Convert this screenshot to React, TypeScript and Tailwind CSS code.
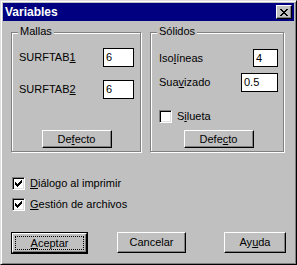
import React from 'react';

const raised =
  'border border-t-white border-l-white border-r-black border-b-black shadow-[inset_-1px_-1px_0_#808080] bg-[#c0c0c0]';
const sunken =
  'border border-t-[#808080] border-l-[#808080] border-r-white border-b-white shadow-[inset_1px_1px_0_#000,inset_-1px_-1px_0_#dfdfdf] bg-white';
const etched = 'border border-[#808080] shadow-[1px_1px_0_#fff,inset_1px_1px_0_#fff]';

function CheckMark() {
  return (
    <svg width="7" height="7" viewBox="0 0 7 7" shapeRendering="crispEdges">
      <path
        d="M6 0h1v3h-1zM5 1h1v3h-1zM4 2h1v3h-1zM3 3h1v3h-1zM2 4h1v3h-1zM1 3h1v3h-1zM0 2h1v3h-1z"
        fill="#000"
      />
    </svg>
  );
}

function CheckBox({ checked }: { checked: boolean }) {
  return (
    <span className={`w-[13px] h-[13px] shrink-0 flex items-center justify-center ${sunken}`}>
      {checked && <CheckMark />}
    </span>
  );
}

function CloseGlyph() {
  return (
    <svg width="8" height="7" viewBox="0 0 8 7" shapeRendering="crispEdges">
      <path
        d="M0 0h2v1h-2zM6 0h2v1h-2zM1 1h2v1h-2zM5 1h2v1h-2zM2 2h4v1h-4zM3 3h2v1h-2zM2 4h4v1h-4zM1 5h2v1h-2zM5 5h2v1h-2zM0 6h2v1h-2zM6 6h2v1h-2z"
        fill="#000"
      />
    </svg>
  );
}

function GroupBox({ label, className, children }: { label: string; className: string; children: React.ReactNode }) {
  return (
    <div className={`relative h-[120px] ${etched} ${className}`}>
      <span className="absolute left-[6px] -top-[8px] px-[2px] bg-[#c0c0c0] leading-[13px]">{label}</span>
      {children}
    </div>
  );
}

export default function App() {
  return (
    <div className="w-[297px] h-[265px] bg-[#c0c0c0] border border-t-[#dfdfdf] border-l-[#dfdfdf] border-r-black border-b-black shadow-[inset_1px_1px_0_#fff,inset_-1px_-1px_0_#808080] p-[2px] flex flex-col font-['Liberation_Sans',Arial,sans-serif] text-[11px] text-black select-none">
      {/* Title bar */}
      <div className="h-[18px] bg-[#000080] flex items-center justify-between pl-[2px] pr-[2px]">
        <span className="text-white font-bold text-[12px] leading-none">Variables</span>
        <span className={`w-[16px] h-[14px] flex items-center justify-center ${raised}`}>
          <CloseGlyph />
        </span>
      </div>

      <div className="flex flex-col pl-[8px]">
        {/* Group boxes */}
        <div className="flex mt-[11px]">
          <GroupBox label="Mallas" className="w-[130px]">
            <div className="flex flex-col pt-[15px] pl-[7px] pr-[6px]">
              <div className="flex items-center justify-between">
                <span>
                  SURFTAB<u>1</u>
                </span>
                <span className="w-[31px] h-[19px] border border-black bg-white pl-[2px] flex items-center">6</span>
              </div>
              <div className="flex items-center justify-between mt-[13px]">
                <span>
                  SURFTAB<u>2</u>
                </span>
                <span className="w-[31px] h-[19px] border border-black bg-white pl-[2px] flex items-center">6</span>
              </div>
              <button className={`mx-auto mt-[31px] w-[70px] h-[18px] flex items-center justify-center ${raised}`}>
                <span>
                  De<u>f</u>ecto
                </span>
              </button>
            </div>
          </GroupBox>

          <GroupBox label="Sólidos" className="w-[134px] ml-[9px]">
            <div className="flex flex-col pt-[16px] pl-[8px] pr-[5px]">
              <div className="flex items-center justify-between">
                <span>
                  Iso<u>l</u>íneas
                </span>
                <span className="w-[25px] h-[18px] border border-black bg-white pl-[2px] flex items-center">4</span>
              </div>
              <div className="flex items-center justify-between mt-[6px]">
                <span>
                  Sua<u>v</u>izado
                </span>
                <span className="w-[37px] h-[19px] border border-black bg-white pl-[2px] flex items-center">0.5</span>
              </div>
              <div className="flex items-center h-[13px] mt-[18px]">
                <CheckBox checked={false} />
                <span className="ml-[5px]">
                  S<u>i</u>lueta
                </span>
              </div>
              <button className={`mx-auto mt-[7px] w-[70px] h-[18px] flex items-center justify-center ${raised}`}>
                <span>
                  Defe<u>c</u>to
                </span>
              </button>
            </div>
          </GroupBox>
        </div>

        {/* Options */}
        <div className="flex items-center h-[13px] mt-[25px] pl-[1px]">
          <CheckBox checked />
          <span className="ml-[5px]">
            <u>D</u>iálogo al imprimir
          </span>
        </div>
        <div className="flex items-center h-[13px] mt-[8px] pl-[1px]">
          <CheckBox checked />
          <span className="ml-[5px]">
            <u>G</u>estión de archivos
          </span>
        </div>

        {/* Buttons */}
        <div className="flex items-start mt-[21px]">
          <button className="w-[77px] h-[22px] border border-black flex">
            <span className={`flex-1 flex p-[2px] ${raised}`}>
              <span className="flex-1 border border-dotted border-black flex items-center justify-center">
                <span>
                  <u>A</u>ceptar
                </span>
              </span>
            </span>
          </button>
          <button className={`ml-[29px] w-[69px] h-[21px] flex items-center justify-center ${raised}`}>Cancelar</button>
          <button className={`ml-[38px] w-[62px] h-[21px] flex items-center justify-center ${raised}`}>
            <span>
              Ay<u>u</u>da
            </span>
          </button>
        </div>
      </div>
    </div>
  );
}
